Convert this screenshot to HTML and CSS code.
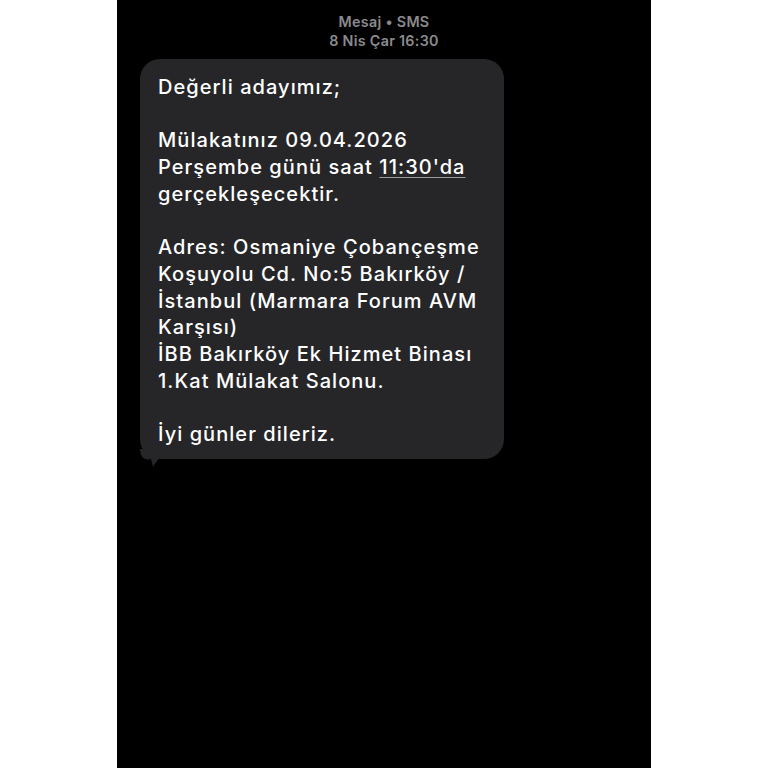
FILE: index.html
```html
<!DOCTYPE html>
<html lang="tr">
<head>
<meta charset="utf-8">
<link rel="stylesheet" href="styles.css">
</head>
<body>
<div class="screen">
  <div class="header">
    <div class="header-line">Mesaj • SMS</div>
    <div class="header-line">8 Nis Çar 16:30</div>
  </div>
  <div class="bubble">
    <p class="para">Değerli adayımız;</p>
    <p class="para">Mülakatınız 09.04.2026<br>Perşembe günü saat <span class="link">11:30'da</span><br>gerçekleşecektir.</p>
    <p class="para">Adres: Osmaniye Çobançeşme<br>Koşuyolu Cd. No:5 Bakırköy /<br>İstanbul (Marmara Forum AVM<br>Karşısı)<br>İBB Bakırköy Ek Hizmet Binası<br>1.Kat Mülakat Salonu.</p>
    <p class="para">İyi günler dileriz.</p>
    <svg class="tail" width="30" height="20" viewBox="0 0 30 20">
      <path d="M0 0 C0 8 5 12 11 10 L13 18 C17 11 21 7 30 0 Z" fill="#262628"/>
    </svg>
  </div>
</div>
</body>
</html>
```
FILE: styles.css
```css
html, body {
  margin: 0;
  padding: 0;
  background: #ffffff;
}
.screen {
  width: 534px;
  height: 768px;
  margin-left: 117px;
  background: #000000;
  padding-top: 12px;
  box-sizing: border-box;
  font-family: Inter, "Noto Sans", sans-serif;
}
.header {
  text-align: center;
  color: #8a8a8e;
  font-size: 14.3px;
  font-weight: 600;
  line-height: 19px;
  letter-spacing: 0.3px;
}
.bubble {
  position: relative;
  margin: 9px 0 0 23px;
  width: 364px;
  box-sizing: border-box;
  background: #262628;
  border-radius: 20px;
  padding: 15px 10px 11px 18px;
  color: #ffffff;
  font-size: 20px;
  font-weight: 500;
  line-height: 26.7px;
  letter-spacing: 1.05px;
}
.para {
  margin: 0 0 26.7px 0;
  white-space: nowrap;
}
.para:last-of-type {
  margin-bottom: 0;
}
.link {
  text-decoration: underline;
  text-decoration-color: #9a9a9e;
  text-underline-offset: 3px;
  text-decoration-thickness: 1px;
}
.tail {
  position: absolute;
  left: 0;
  bottom: -10px;
}
```
